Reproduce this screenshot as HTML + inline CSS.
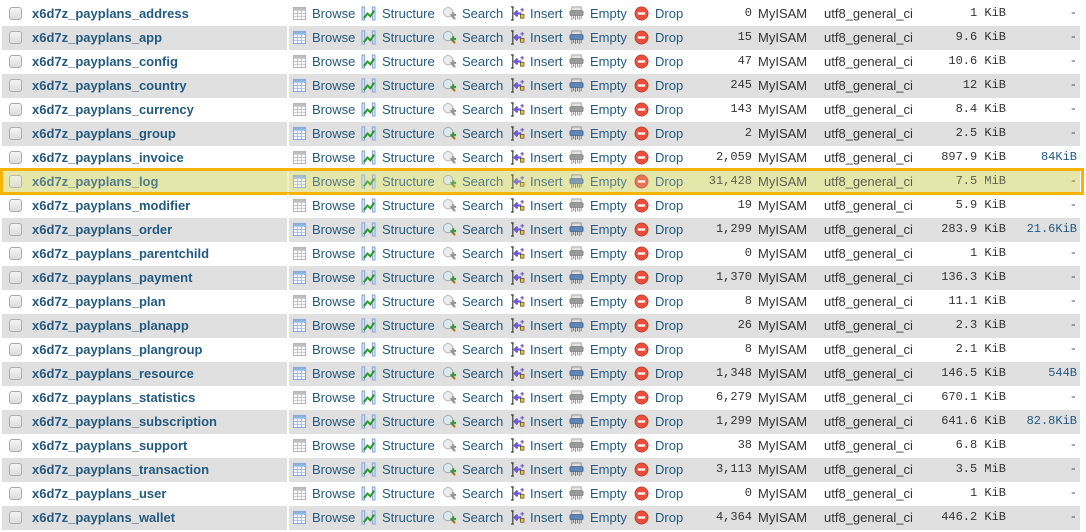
<!DOCTYPE html>
<html><head><meta charset="utf-8"><style>
body{margin:0;width:1086px;height:532px;background:#fff;overflow:hidden;font-family:"Liberation Sans",sans-serif;font-size:13px;position:relative}
.r{position:absolute;left:2px;width:1078px;height:24px;line-height:23px;color:#235a81}
.r.g{background:#e0e0e0}
.r.h{background:#e5e6a9}
.r.h>*{opacity:.75}
.hl{position:absolute;left:0;top:168px;width:1078px;height:21px;border:3px solid #fab400}
.r>*{position:absolute;top:0;white-space:nowrap}
.sep{left:285px;width:2px;height:24px;background:#fff}
.cb{left:7px;top:5px;width:11px;height:11px;border:1px solid #aaa;border-radius:3px;background:linear-gradient(#f4f4f4,#ddd)}
.n{left:30px;font-weight:bold}
svg.i{top:4px;width:15px;height:15px}
.r:not(.g) svg.gr{filter:grayscale(1) opacity(.8)}
.a1{left:310px}.a2{left:380px}.a3{left:460px}.a4{left:528px}.a5{left:588px}.a6{left:653px}
.i1{left:290px}.i2{left:359px}.i3{left:440px}.i4{left:508px}.i5{left:567px}.i6{left:632px}
.rc{right:328px;font-family:"Liberation Mono",monospace;font-size:12px;color:#333}
.en{left:756px;color:#333}
.co{left:822px;color:#333}
.sz{right:74px;font-family:"Liberation Mono",monospace;font-size:12px;color:#333}
.ov{right:3px;font-family:"Liberation Mono",monospace;font-size:12px;color:#235a81}
.ov.m{color:#444}
</style></head><body>
<svg width="0" height="0" style="position:absolute">
<symbol id="b" viewBox="0 0 16 16"><rect x="1.5" y="1.5" width="13" height="13" fill="#fff" stroke="#7aa0d0"/><rect x="2" y="2" width="12" height="3" fill="#8fb3e0"/><path d="M2 8h12M2 11h12M6 5v9M10 5v9" stroke="#9cb8dc"/></symbol>
<symbol id="s" viewBox="0 0 16 16"><rect x="1" y="1" width="3" height="14" fill="#cfe0f4" stroke="#6c94c8" stroke-width=".8"/><rect x="12" y="1" width="3" height="14" fill="#cfe0f4" stroke="#6c94c8" stroke-width=".8"/><path d="M3 13l4-5 3 3 4-6" stroke="#2e9a2e" stroke-width="2.2" fill="none"/></symbol>
<symbol id="q" viewBox="0 0 16 16"><circle cx="6.5" cy="6.5" r="5" fill="#dfe8f0" stroke="#9aa" /><path d="M10 10l4 4" stroke="#b8862b" stroke-width="2.5"/><path d="M9 9.5h6M12 6.5v6" stroke="#3a9a3a" stroke-width="2.2"/></symbol>
<symbol id="n" viewBox="0 0 16 16"><path d="M1 1h3M1 15h3M3 1v14" stroke="#333" stroke-width="1.2" fill="none"/><path d="M12 8H6M8 5l-3 3 3 3" stroke="#6a5acd" stroke-width="2.4" fill="none"/><rect x="11" y="9" width="4" height="4" fill="#f0c020" stroke="#333" stroke-width=".6"/><path d="M13 2v4M11 4h4" stroke="#6a5acd" stroke-width="1.2"/></symbol>
<symbol id="e" viewBox="0 0 16 16"><rect x="3" y="1" width="10" height="4" fill="#ddd" stroke="#777" stroke-width=".8"/><rect x="1" y="5" width="14" height="5" rx="1" fill="#5f86bd" stroke="#3a5a8a" stroke-width=".8"/><path d="M3 10v5M5 10v4M7 10v5M9 10v4M11 10v5M13 10v4" stroke="#777"/></symbol>
<symbol id="d" viewBox="0 0 16 16"><circle cx="8" cy="8" r="7" fill="#e8503a" stroke="#c03020" stroke-width=".8"/><rect x="4" y="6.8" width="8" height="2.4" fill="#fff"/></symbol>
</svg>
<div class="r" style="top:2px"><span class="cb"></span><span class="n">x6d7z_payplans_address</span><span class="sep"></span><svg class="i i1 gr"><use href="#b"/></svg><span class="a1">Browse</span><svg class="i i2"><use href="#s"/></svg><span class="a2">Structure</span><svg class="i i3 gr"><use href="#q"/></svg><span class="a3">Search</span><svg class="i i4"><use href="#n"/></svg><span class="a4">Insert</span><svg class="i i5 gr"><use href="#e"/></svg><span class="a5">Empty</span><svg class="i i6"><use href="#d"/></svg><span class="a6">Drop</span><span class="rc">0</span><span class="en">MyISAM</span><span class="co">utf8_general_ci</span><span class="sz">1 KiB</span><span class="ov m">-</span></div>
<div class="r g" style="top:26px"><span class="cb"></span><span class="n">x6d7z_payplans_app</span><span class="sep"></span><svg class="i i1 gr"><use href="#b"/></svg><span class="a1">Browse</span><svg class="i i2"><use href="#s"/></svg><span class="a2">Structure</span><svg class="i i3 gr"><use href="#q"/></svg><span class="a3">Search</span><svg class="i i4"><use href="#n"/></svg><span class="a4">Insert</span><svg class="i i5 gr"><use href="#e"/></svg><span class="a5">Empty</span><svg class="i i6"><use href="#d"/></svg><span class="a6">Drop</span><span class="rc">15</span><span class="en">MyISAM</span><span class="co">utf8_general_ci</span><span class="sz">9.6 KiB</span><span class="ov m">-</span></div>
<div class="r" style="top:50px"><span class="cb"></span><span class="n">x6d7z_payplans_config</span><span class="sep"></span><svg class="i i1 gr"><use href="#b"/></svg><span class="a1">Browse</span><svg class="i i2"><use href="#s"/></svg><span class="a2">Structure</span><svg class="i i3 gr"><use href="#q"/></svg><span class="a3">Search</span><svg class="i i4"><use href="#n"/></svg><span class="a4">Insert</span><svg class="i i5 gr"><use href="#e"/></svg><span class="a5">Empty</span><svg class="i i6"><use href="#d"/></svg><span class="a6">Drop</span><span class="rc">47</span><span class="en">MyISAM</span><span class="co">utf8_general_ci</span><span class="sz">10.6 KiB</span><span class="ov m">-</span></div>
<div class="r g" style="top:74px"><span class="cb"></span><span class="n">x6d7z_payplans_country</span><span class="sep"></span><svg class="i i1 gr"><use href="#b"/></svg><span class="a1">Browse</span><svg class="i i2"><use href="#s"/></svg><span class="a2">Structure</span><svg class="i i3 gr"><use href="#q"/></svg><span class="a3">Search</span><svg class="i i4"><use href="#n"/></svg><span class="a4">Insert</span><svg class="i i5 gr"><use href="#e"/></svg><span class="a5">Empty</span><svg class="i i6"><use href="#d"/></svg><span class="a6">Drop</span><span class="rc">245</span><span class="en">MyISAM</span><span class="co">utf8_general_ci</span><span class="sz">12 KiB</span><span class="ov m">-</span></div>
<div class="r" style="top:98px"><span class="cb"></span><span class="n">x6d7z_payplans_currency</span><span class="sep"></span><svg class="i i1 gr"><use href="#b"/></svg><span class="a1">Browse</span><svg class="i i2"><use href="#s"/></svg><span class="a2">Structure</span><svg class="i i3 gr"><use href="#q"/></svg><span class="a3">Search</span><svg class="i i4"><use href="#n"/></svg><span class="a4">Insert</span><svg class="i i5 gr"><use href="#e"/></svg><span class="a5">Empty</span><svg class="i i6"><use href="#d"/></svg><span class="a6">Drop</span><span class="rc">143</span><span class="en">MyISAM</span><span class="co">utf8_general_ci</span><span class="sz">8.4 KiB</span><span class="ov m">-</span></div>
<div class="r g" style="top:122px"><span class="cb"></span><span class="n">x6d7z_payplans_group</span><span class="sep"></span><svg class="i i1 gr"><use href="#b"/></svg><span class="a1">Browse</span><svg class="i i2"><use href="#s"/></svg><span class="a2">Structure</span><svg class="i i3 gr"><use href="#q"/></svg><span class="a3">Search</span><svg class="i i4"><use href="#n"/></svg><span class="a4">Insert</span><svg class="i i5 gr"><use href="#e"/></svg><span class="a5">Empty</span><svg class="i i6"><use href="#d"/></svg><span class="a6">Drop</span><span class="rc">2</span><span class="en">MyISAM</span><span class="co">utf8_general_ci</span><span class="sz">2.5 KiB</span><span class="ov m">-</span></div>
<div class="r" style="top:146px"><span class="cb"></span><span class="n">x6d7z_payplans_invoice</span><span class="sep"></span><svg class="i i1 gr"><use href="#b"/></svg><span class="a1">Browse</span><svg class="i i2"><use href="#s"/></svg><span class="a2">Structure</span><svg class="i i3 gr"><use href="#q"/></svg><span class="a3">Search</span><svg class="i i4"><use href="#n"/></svg><span class="a4">Insert</span><svg class="i i5 gr"><use href="#e"/></svg><span class="a5">Empty</span><svg class="i i6"><use href="#d"/></svg><span class="a6">Drop</span><span class="rc">2,059</span><span class="en">MyISAM</span><span class="co">utf8_general_ci</span><span class="sz">897.9 KiB</span><span class="ov">84KiB</span></div>
<div class="r g h" style="top:170px"><span class="cb"></span><span class="n">x6d7z_payplans_log</span><span class="sep" style="background:#f2f2d8"></span><svg class="i i1 gr"><use href="#b"/></svg><span class="a1">Browse</span><svg class="i i2"><use href="#s"/></svg><span class="a2">Structure</span><svg class="i i3 gr"><use href="#q"/></svg><span class="a3">Search</span><svg class="i i4"><use href="#n"/></svg><span class="a4">Insert</span><svg class="i i5 gr"><use href="#e"/></svg><span class="a5">Empty</span><svg class="i i6"><use href="#d"/></svg><span class="a6">Drop</span><span class="rc">31,428</span><span class="en">MyISAM</span><span class="co">utf8_general_ci</span><span class="sz">7.5 MiB</span><span class="ov m">-</span></div>
<div class="hl"></div>
<div class="r" style="top:194px"><span class="cb"></span><span class="n">x6d7z_payplans_modifier</span><span class="sep"></span><svg class="i i1 gr"><use href="#b"/></svg><span class="a1">Browse</span><svg class="i i2"><use href="#s"/></svg><span class="a2">Structure</span><svg class="i i3 gr"><use href="#q"/></svg><span class="a3">Search</span><svg class="i i4"><use href="#n"/></svg><span class="a4">Insert</span><svg class="i i5 gr"><use href="#e"/></svg><span class="a5">Empty</span><svg class="i i6"><use href="#d"/></svg><span class="a6">Drop</span><span class="rc">19</span><span class="en">MyISAM</span><span class="co">utf8_general_ci</span><span class="sz">5.9 KiB</span><span class="ov m">-</span></div>
<div class="r g" style="top:218px"><span class="cb"></span><span class="n">x6d7z_payplans_order</span><span class="sep"></span><svg class="i i1 gr"><use href="#b"/></svg><span class="a1">Browse</span><svg class="i i2"><use href="#s"/></svg><span class="a2">Structure</span><svg class="i i3 gr"><use href="#q"/></svg><span class="a3">Search</span><svg class="i i4"><use href="#n"/></svg><span class="a4">Insert</span><svg class="i i5 gr"><use href="#e"/></svg><span class="a5">Empty</span><svg class="i i6"><use href="#d"/></svg><span class="a6">Drop</span><span class="rc">1,299</span><span class="en">MyISAM</span><span class="co">utf8_general_ci</span><span class="sz">283.9 KiB</span><span class="ov">21.6KiB</span></div>
<div class="r" style="top:242px"><span class="cb"></span><span class="n">x6d7z_payplans_parentchild</span><span class="sep"></span><svg class="i i1 gr"><use href="#b"/></svg><span class="a1">Browse</span><svg class="i i2"><use href="#s"/></svg><span class="a2">Structure</span><svg class="i i3 gr"><use href="#q"/></svg><span class="a3">Search</span><svg class="i i4"><use href="#n"/></svg><span class="a4">Insert</span><svg class="i i5 gr"><use href="#e"/></svg><span class="a5">Empty</span><svg class="i i6"><use href="#d"/></svg><span class="a6">Drop</span><span class="rc">0</span><span class="en">MyISAM</span><span class="co">utf8_general_ci</span><span class="sz">1 KiB</span><span class="ov m">-</span></div>
<div class="r g" style="top:266px"><span class="cb"></span><span class="n">x6d7z_payplans_payment</span><span class="sep"></span><svg class="i i1 gr"><use href="#b"/></svg><span class="a1">Browse</span><svg class="i i2"><use href="#s"/></svg><span class="a2">Structure</span><svg class="i i3 gr"><use href="#q"/></svg><span class="a3">Search</span><svg class="i i4"><use href="#n"/></svg><span class="a4">Insert</span><svg class="i i5 gr"><use href="#e"/></svg><span class="a5">Empty</span><svg class="i i6"><use href="#d"/></svg><span class="a6">Drop</span><span class="rc">1,370</span><span class="en">MyISAM</span><span class="co">utf8_general_ci</span><span class="sz">136.3 KiB</span><span class="ov m">-</span></div>
<div class="r" style="top:290px"><span class="cb"></span><span class="n">x6d7z_payplans_plan</span><span class="sep"></span><svg class="i i1 gr"><use href="#b"/></svg><span class="a1">Browse</span><svg class="i i2"><use href="#s"/></svg><span class="a2">Structure</span><svg class="i i3 gr"><use href="#q"/></svg><span class="a3">Search</span><svg class="i i4"><use href="#n"/></svg><span class="a4">Insert</span><svg class="i i5 gr"><use href="#e"/></svg><span class="a5">Empty</span><svg class="i i6"><use href="#d"/></svg><span class="a6">Drop</span><span class="rc">8</span><span class="en">MyISAM</span><span class="co">utf8_general_ci</span><span class="sz">11.1 KiB</span><span class="ov m">-</span></div>
<div class="r g" style="top:314px"><span class="cb"></span><span class="n">x6d7z_payplans_planapp</span><span class="sep"></span><svg class="i i1 gr"><use href="#b"/></svg><span class="a1">Browse</span><svg class="i i2"><use href="#s"/></svg><span class="a2">Structure</span><svg class="i i3 gr"><use href="#q"/></svg><span class="a3">Search</span><svg class="i i4"><use href="#n"/></svg><span class="a4">Insert</span><svg class="i i5 gr"><use href="#e"/></svg><span class="a5">Empty</span><svg class="i i6"><use href="#d"/></svg><span class="a6">Drop</span><span class="rc">26</span><span class="en">MyISAM</span><span class="co">utf8_general_ci</span><span class="sz">2.3 KiB</span><span class="ov m">-</span></div>
<div class="r" style="top:338px"><span class="cb"></span><span class="n">x6d7z_payplans_plangroup</span><span class="sep"></span><svg class="i i1 gr"><use href="#b"/></svg><span class="a1">Browse</span><svg class="i i2"><use href="#s"/></svg><span class="a2">Structure</span><svg class="i i3 gr"><use href="#q"/></svg><span class="a3">Search</span><svg class="i i4"><use href="#n"/></svg><span class="a4">Insert</span><svg class="i i5 gr"><use href="#e"/></svg><span class="a5">Empty</span><svg class="i i6"><use href="#d"/></svg><span class="a6">Drop</span><span class="rc">8</span><span class="en">MyISAM</span><span class="co">utf8_general_ci</span><span class="sz">2.1 KiB</span><span class="ov m">-</span></div>
<div class="r g" style="top:362px"><span class="cb"></span><span class="n">x6d7z_payplans_resource</span><span class="sep"></span><svg class="i i1 gr"><use href="#b"/></svg><span class="a1">Browse</span><svg class="i i2"><use href="#s"/></svg><span class="a2">Structure</span><svg class="i i3 gr"><use href="#q"/></svg><span class="a3">Search</span><svg class="i i4"><use href="#n"/></svg><span class="a4">Insert</span><svg class="i i5 gr"><use href="#e"/></svg><span class="a5">Empty</span><svg class="i i6"><use href="#d"/></svg><span class="a6">Drop</span><span class="rc">1,348</span><span class="en">MyISAM</span><span class="co">utf8_general_ci</span><span class="sz">146.5 KiB</span><span class="ov">544B</span></div>
<div class="r" style="top:386px"><span class="cb"></span><span class="n">x6d7z_payplans_statistics</span><span class="sep"></span><svg class="i i1 gr"><use href="#b"/></svg><span class="a1">Browse</span><svg class="i i2"><use href="#s"/></svg><span class="a2">Structure</span><svg class="i i3 gr"><use href="#q"/></svg><span class="a3">Search</span><svg class="i i4"><use href="#n"/></svg><span class="a4">Insert</span><svg class="i i5 gr"><use href="#e"/></svg><span class="a5">Empty</span><svg class="i i6"><use href="#d"/></svg><span class="a6">Drop</span><span class="rc">6,279</span><span class="en">MyISAM</span><span class="co">utf8_general_ci</span><span class="sz">670.1 KiB</span><span class="ov m">-</span></div>
<div class="r g" style="top:410px"><span class="cb"></span><span class="n">x6d7z_payplans_subscription</span><span class="sep"></span><svg class="i i1 gr"><use href="#b"/></svg><span class="a1">Browse</span><svg class="i i2"><use href="#s"/></svg><span class="a2">Structure</span><svg class="i i3 gr"><use href="#q"/></svg><span class="a3">Search</span><svg class="i i4"><use href="#n"/></svg><span class="a4">Insert</span><svg class="i i5 gr"><use href="#e"/></svg><span class="a5">Empty</span><svg class="i i6"><use href="#d"/></svg><span class="a6">Drop</span><span class="rc">1,299</span><span class="en">MyISAM</span><span class="co">utf8_general_ci</span><span class="sz">641.6 KiB</span><span class="ov">82.8KiB</span></div>
<div class="r" style="top:434px"><span class="cb"></span><span class="n">x6d7z_payplans_support</span><span class="sep"></span><svg class="i i1 gr"><use href="#b"/></svg><span class="a1">Browse</span><svg class="i i2"><use href="#s"/></svg><span class="a2">Structure</span><svg class="i i3 gr"><use href="#q"/></svg><span class="a3">Search</span><svg class="i i4"><use href="#n"/></svg><span class="a4">Insert</span><svg class="i i5 gr"><use href="#e"/></svg><span class="a5">Empty</span><svg class="i i6"><use href="#d"/></svg><span class="a6">Drop</span><span class="rc">38</span><span class="en">MyISAM</span><span class="co">utf8_general_ci</span><span class="sz">6.8 KiB</span><span class="ov m">-</span></div>
<div class="r g" style="top:458px"><span class="cb"></span><span class="n">x6d7z_payplans_transaction</span><span class="sep"></span><svg class="i i1 gr"><use href="#b"/></svg><span class="a1">Browse</span><svg class="i i2"><use href="#s"/></svg><span class="a2">Structure</span><svg class="i i3 gr"><use href="#q"/></svg><span class="a3">Search</span><svg class="i i4"><use href="#n"/></svg><span class="a4">Insert</span><svg class="i i5 gr"><use href="#e"/></svg><span class="a5">Empty</span><svg class="i i6"><use href="#d"/></svg><span class="a6">Drop</span><span class="rc">3,113</span><span class="en">MyISAM</span><span class="co">utf8_general_ci</span><span class="sz">3.5 MiB</span><span class="ov m">-</span></div>
<div class="r" style="top:482px"><span class="cb"></span><span class="n">x6d7z_payplans_user</span><span class="sep"></span><svg class="i i1 gr"><use href="#b"/></svg><span class="a1">Browse</span><svg class="i i2"><use href="#s"/></svg><span class="a2">Structure</span><svg class="i i3 gr"><use href="#q"/></svg><span class="a3">Search</span><svg class="i i4"><use href="#n"/></svg><span class="a4">Insert</span><svg class="i i5 gr"><use href="#e"/></svg><span class="a5">Empty</span><svg class="i i6"><use href="#d"/></svg><span class="a6">Drop</span><span class="rc">0</span><span class="en">MyISAM</span><span class="co">utf8_general_ci</span><span class="sz">1 KiB</span><span class="ov m">-</span></div>
<div class="r g" style="top:506px"><span class="cb"></span><span class="n">x6d7z_payplans_wallet</span><span class="sep"></span><svg class="i i1 gr"><use href="#b"/></svg><span class="a1">Browse</span><svg class="i i2"><use href="#s"/></svg><span class="a2">Structure</span><svg class="i i3 gr"><use href="#q"/></svg><span class="a3">Search</span><svg class="i i4"><use href="#n"/></svg><span class="a4">Insert</span><svg class="i i5 gr"><use href="#e"/></svg><span class="a5">Empty</span><svg class="i i6"><use href="#d"/></svg><span class="a6">Drop</span><span class="rc">4,364</span><span class="en">MyISAM</span><span class="co">utf8_general_ci</span><span class="sz">446.2 KiB</span><span class="ov m">-</span></div>
</body></html>
